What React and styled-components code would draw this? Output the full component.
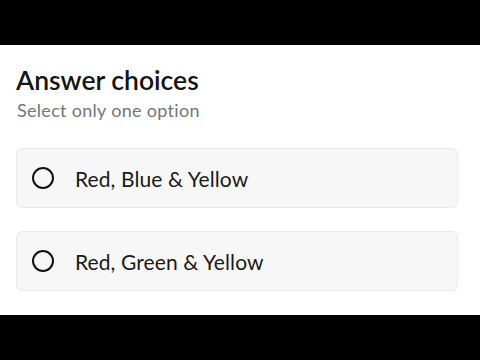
import React, { useState } from 'react'
import styled, { createGlobalStyle } from 'styled-components'

const GlobalStyle = createGlobalStyle`
  html, body {
    margin: 0;
    padding: 0;
    background: #000000;
  }
  body {
    font-family: Lato, "Noto Sans", sans-serif;
  }
`

const Frame = styled.div`
  width: 480px;
  height: 360px;
  display: flex;
  flex-direction: column;
  justify-content: center;
  background: #000000;
`
const Panel = styled.section`
  height: 270px;
  box-sizing: border-box;
  background: #ffffff;
  padding: 20px 22px 0 16px;
  display: flex;
  flex-direction: column;
`
const Title = styled.h1`
  margin: 0;
  font-size: 26.5px;
  line-height: 31px;
  font-weight: 600;
  color: #141414;
`
const Hint = styled.p`
  margin: 4px 0 0 1px;
  font-size: 18px;
  line-height: 21px;
  letter-spacing: 0.3px;
  color: #767676;
`
const List = styled.div`
  display: grid;
  grid-gap: 23px;
  margin-top: 27px;
`
const Choice = styled.label`
  display: flex;
  align-items: center;
  gap: 21px;
  height: 60px;
  box-sizing: border-box;
  padding: 0 0 0 15px;
  background: #f7f7f7;
  border: 1px solid #e9e9e9;
  border-radius: 6px;
  cursor: pointer;
`
const Radio = styled.span`
  width: 22px;
  height: 22px;
  box-sizing: border-box;
  border-radius: 50%;
  border: 2.7px solid #111111;
  display: grid;
  place-items: center;
  &::after {
    content: '';
    width: 10px;
    height: 10px;
    border-radius: 50%;
    background: ${(p) => (p.checked ? '#111111' : 'transparent')};
  }
`
const Label = styled.span`
  font-size: 21px;
  line-height: 24px;
  padding-top: 1px;
  letter-spacing: 0.1px;
  color: #1a1a1a;
`

const options = ['Red, Blue & Yellow', 'Red, Green & Yellow']

const App = () => {
  const [picked, setPicked] = useState(null)

  return (
    <Frame>
      <GlobalStyle />
      <Panel>
        <Title>Answer choices</Title>
        <Hint>Select only one option</Hint>
        <List>
          {options.map((opt) => (
            <Choice key={opt} onClick={() => setPicked(opt)}>
              <Radio checked={picked === opt} />
              <Label>{opt}</Label>
            </Choice>
          ))}
        </List>
      </Panel>
    </Frame>
  )
}

export default App
